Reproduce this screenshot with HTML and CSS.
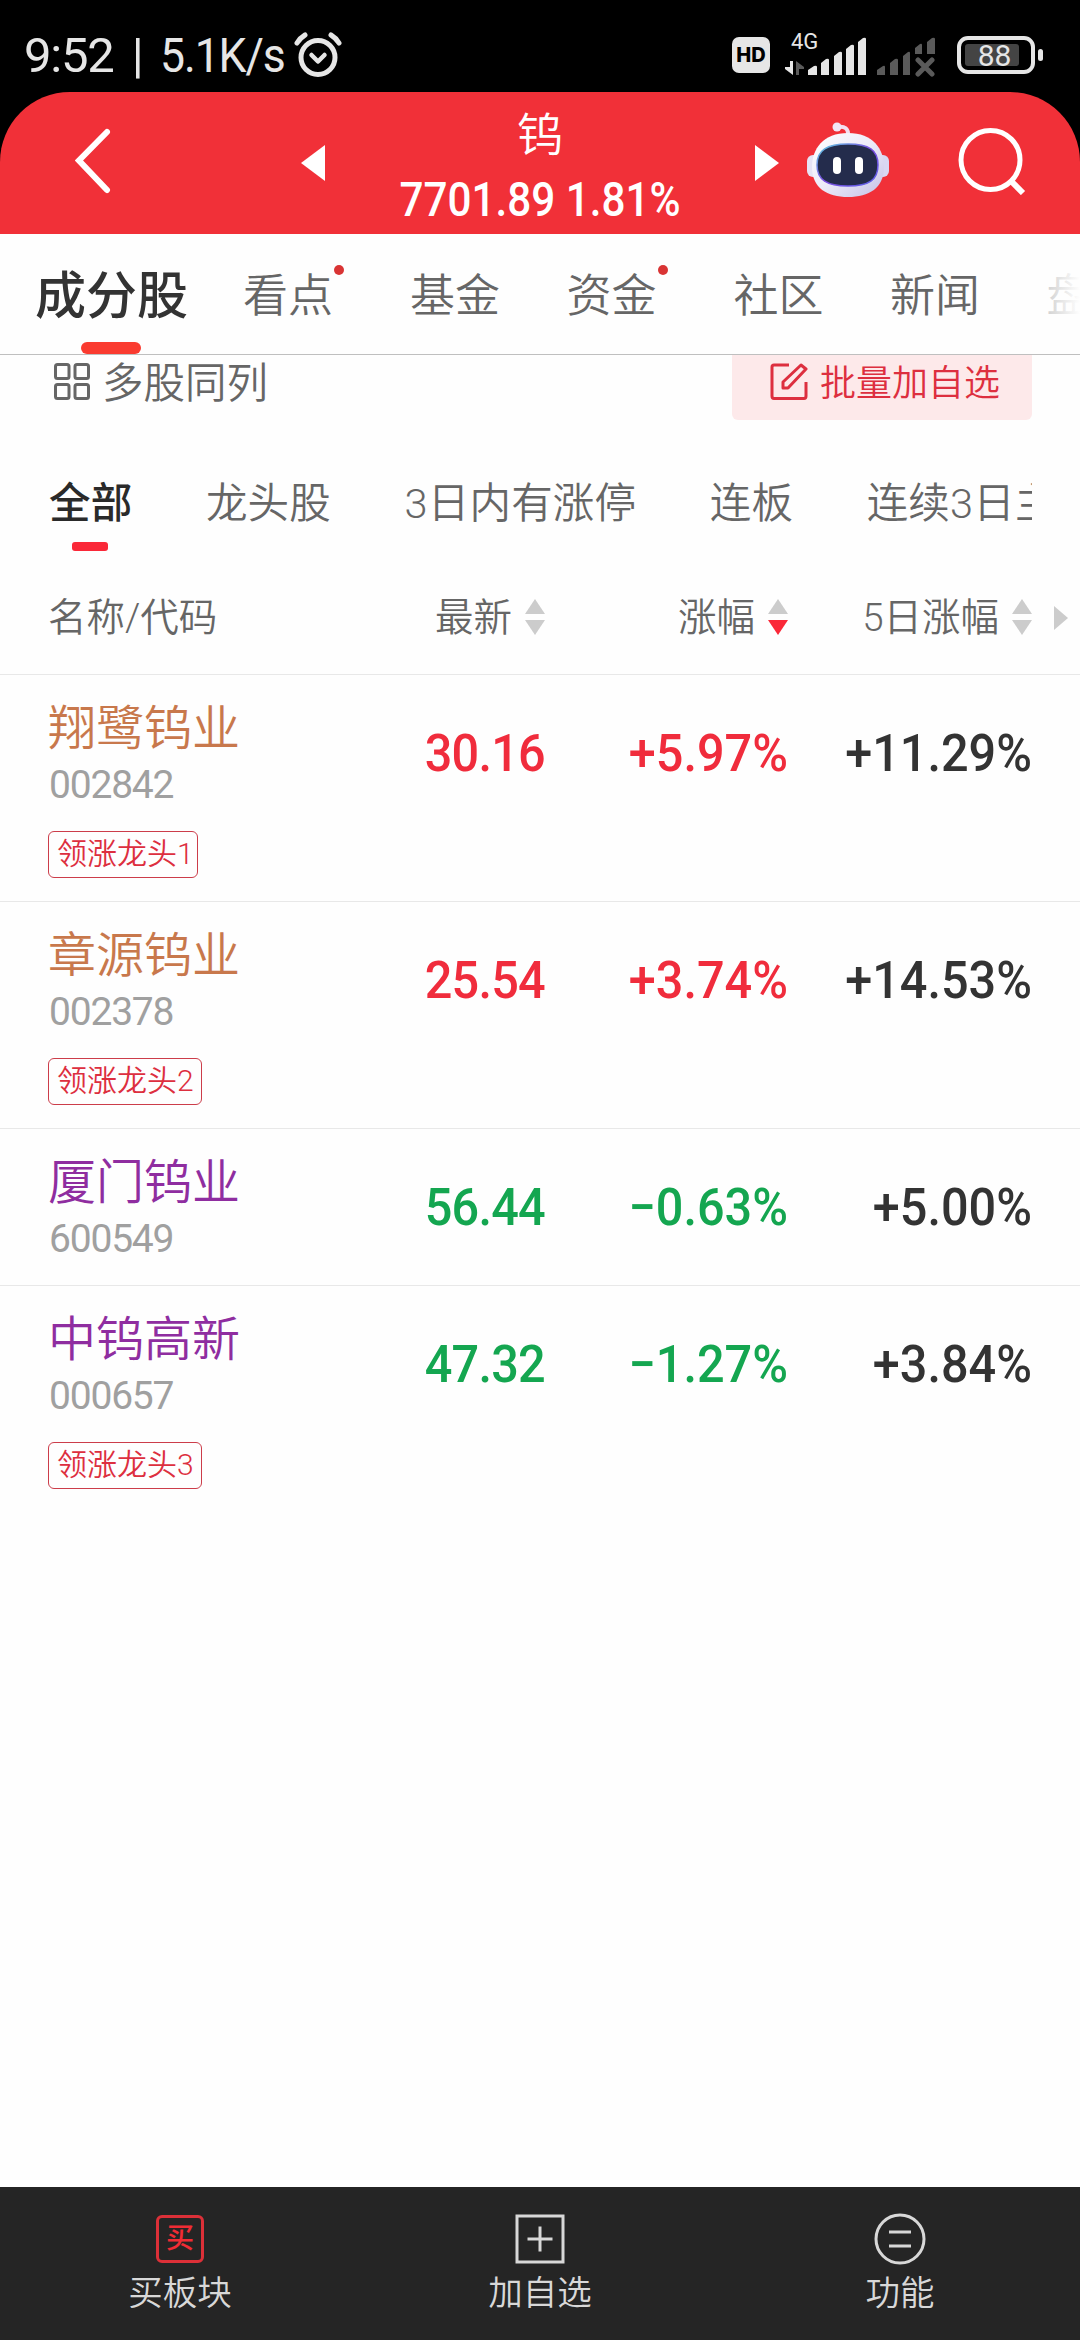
FILE: index.html
```html
<!DOCTYPE html>
<html lang="zh-CN">
<head>
    <meta charset="UTF-8">
    <meta name="viewport" content="width=device-width, initial-scale=1.0">
    <title>钨 - 成分股</title>
    <link rel="stylesheet" href="styles.css">
</head>
<body>
    <div class="status-bar">
        <div class="status-text"><span>9:52 | </span><span class="speed">5.1K/s</span></div>
        <svg class="alarm" width="48" height="46" viewBox="0 0 48 46" fill="none" stroke="#e6e6e6" stroke-linecap="round">
            <circle cx="24" cy="25.500" r="17" stroke-width="5"/>
            <path d="M17.500 23l6.500 6.500 6.500-6.500" stroke-width="4.500" stroke-linejoin="round"/>
            <path d="M3 11Q6 6 11 3M37 3Q42 6 45 11" stroke-width="5"/>
        </svg>
        <div class="status-icons">
            <span class="hd">HD</span>
            <div class="signal">
                <span class="net">4G</span>
                <svg width="82" height="44" viewBox="0 0 82 44">
                    <path fill="#e6e6e6" d="M23 42v-5l6-4q3-1 3 1v8zM36 42v-12l5-4q3-1 3 1v15zM49 42v-19l5-4q3-1 3 1v22zM61 42v-26l5-4q3-1 3 1v29zM73 42v-33l5-4q3-1 3 1v36z"/>
                    <path fill="#e6e6e6" d="M5 28h3v14L0 36v-2h5z"/>
                    <path fill="#5a5a5a" d="M11 42v-14l8 6v2h-5v6z"/>
                </svg>
            </div>
            <svg class="signal-off" width="60" height="44" viewBox="0 0 60 44">
                <path fill="#5a5a5a" d="M1 42v-5l6-4q2-1 2 1v8zM14 42v-12l5-4q3-1 3 1v15zM27 42v-19l5-4q2-1 2 1v22zM39 21v-6l5-4q2-1 2 1v9zM51 21v-12l5-4q3-1 3 1v15z"/>
                <path stroke="#5a5a5a" stroke-width="5" stroke-linecap="round" d="M42 27l14 14M56 27l-14 14"/>
            </svg>
            <div class="battery"><span class="level">88</span></div>
        </div>
    </div>

    <div class="header">
        <svg class="back" width="36" height="66" viewBox="0 0 36 66" fill="none" stroke="#fff" stroke-width="6" stroke-linecap="round">
            <path d="M32 4L4 32.500 32 62"/>
        </svg>
        <svg class="prev" width="24" height="36" viewBox="0 0 24 36"><path fill="#fff" d="M24 0v36L0 18z"/></svg>
        <div class="title">
            <div class="title-name">钨</div>
            <div class="title-price">7701.89 1.81%</div>
        </div>
        <svg class="next" width="24" height="36" viewBox="0 0 24 36"><path fill="#fff" d="M0 0v36l24-18z"/></svg>
        <svg class="robot" width="82" height="76" viewBox="0 0 82 76">
            <defs>
                <linearGradient id="shell" x1="0" y1="0" x2="1" y2="1">
                    <stop offset="0" stop-color="#fff"/>
                    <stop offset=".5" stop-color="#eceaf8"/>
                    <stop offset="1" stop-color="#c4c1e6"/>
                </linearGradient>
                <linearGradient id="rim" x1="0" y1="0" x2="1" y2="1">
                    <stop offset="0" stop-color="#5fd0e0"/>
                    <stop offset=".5" stop-color="#7b4be0"/>
                    <stop offset="1" stop-color="#5a62e8"/>
                </linearGradient>
            </defs>
            <path d="M30 5Q42 3 41 14" fill="none" stroke="#f3dff0" stroke-width="4"/>
            <circle cx="30" cy="5" r="4.500" fill="#f1e6f6"/>
            <rect x="0" y="33" width="14" height="22" rx="6" fill="#e6e3f5"/>
            <rect x="68" y="33" width="14" height="22" rx="6" fill="#d9d7f2"/>
            <path d="M41 11C66 11 77 27 77 45C77 66 62 75 41 75S5 66 5 45C5 27 16 11 41 11z" fill="url(#shell)"/>
            <path d="M41 22C62 22 71 28 71 43C71 58 62 64 41 64S10 58 10 43C10 28 20 22 41 22z" fill="#242c4c" stroke="url(#rim)" stroke-width="1.500"/>
            <rect x="26" y="35" width="8" height="17" rx="4" fill="#fff"/>
            <rect x="48" y="35" width="8" height="17" rx="4" fill="#fff"/>
        </svg>
        <svg class="search" width="68" height="68" viewBox="0 0 68 68" fill="none" stroke="#fff" stroke-width="5">
            <circle cx="32.500" cy="33" r="29.500"/>
            <path d="M53 54l12 12" stroke-width="6"/>
        </svg>
    </div>

    <div class="tabs">
        <span class="tab active">成分股</span>
        <span class="tab dot">看点</span>
        <span class="tab">基金</span>
        <span class="tab dot">资金</span>
        <span class="tab">社区</span>
        <span class="tab">新闻</span>
        <span class="tab">盘</span>
    </div>

    <div class="tools">
        <div class="multi">
            <svg width="36" height="38" viewBox="0 0 36 38" fill="none" stroke="#666" stroke-width="3">
                <rect x="1.500" y="1.500" width="13.500" height="14" rx="2"/>
                <rect x="21" y="1.500" width="13.500" height="14" rx="2"/>
                <rect x="1.500" y="21.500" width="13.500" height="14" rx="2"/>
                <rect x="21" y="21.500" width="13.500" height="14" rx="2"/>
            </svg>
            <span>多股同列</span>
        </div>
        <div class="batch">
            <svg width="38" height="38" viewBox="0 0 38 38" fill="none" stroke="#dd2f3f" stroke-width="3" stroke-linejoin="round">
                <path d="M19 2H4Q2 2 2 4V33Q2 35.500 4 35.500H34Q36 35.500 36 33V19"/>
                <path d="M13 25v-6L31 2l5 4L18 25z"/>
            </svg>
            <span>批量加自选</span>
        </div>
    </div>

    <div class="filters">
        <span class="filter active">全部</span>
        <span class="filter">龙头股</span>
        <span class="filter">3日内有涨停</span>
        <span class="filter">连板</span>
        <span class="filter">连续3日主</span>
    </div>

    <div class="row head">
        <span class="col-name">名称/代码</span>
        <span class="col"><span>最新</span><i class="sort"></i></span>
        <span class="col"><span>涨幅</span><i class="sort desc"></i></span>
        <span class="col"><span>5日涨幅</span><i class="sort"></i></span>
        <i class="more"></i>
    </div>

    <div class="row">
        <div class="stock">
            <div class="name orange">翔鹭钨业</div>
            <div class="code">002842</div>
            <div class="tag first">领涨龙头1</div>
        </div>
        <span class="num price up">30.16</span>
        <span class="num up">+5.97%</span>
        <span class="num">+11.29%</span>
    </div>
    <div class="row">
        <div class="stock">
            <div class="name orange">章源钨业</div>
            <div class="code">002378</div>
            <div class="tag">领涨龙头2</div>
        </div>
        <span class="num price up">25.54</span>
        <span class="num up">+3.74%</span>
        <span class="num">+14.53%</span>
    </div>
    <div class="row">
        <div class="stock">
            <div class="name purple">厦门钨业</div>
            <div class="code">600549</div>
        </div>
        <span class="num price down">56.44</span>
        <span class="num down">−0.63%</span>
        <span class="num">+5.00%</span>
    </div>
    <div class="row last">
        <div class="stock">
            <div class="name purple">中钨高新</div>
            <div class="code">000657</div>
            <div class="tag">领涨龙头3</div>
        </div>
        <span class="num price down">47.32</span>
        <span class="num down">−1.27%</span>
        <span class="num">+3.84%</span>
    </div>

    <div class="bottom-bar">
        <div class="action">
            <span class="buy">买</span>
            <span>买板块</span>
        </div>
        <div class="action">
            <svg width="52" height="52" viewBox="0 0 52 52" fill="none" stroke="#d8d8d8" stroke-width="3">
                <path d="M3 3H49V49H3zM26 13.500V38.500M13.500 26H38.500"/>
            </svg>
            <span>加自选</span>
        </div>
        <div class="action">
            <svg width="52" height="52" viewBox="0 0 52 52" fill="none" stroke="#d8d8d8" stroke-width="3">
                <circle cx="26" cy="26" r="24"/>
                <path d="M15 19H37M15 33H37"/>
            </svg>
            <span>功能</span>
        </div>
    </div>
</body>
</html>
```
FILE: styles.css
```css
* {
    box-sizing: border-box;
}
body {
    margin: 0;
    width: 1080px;
    height: 2340px;
    display: flex;
    flex-direction: column;
    overflow: hidden;
    background: #fefefe;
    font-family: Roboto, "Noto Sans CJK SC", sans-serif;
    font-weight: 350;
    color: #666;
    white-space: nowrap;
}
svg {
    flex: none;
    display: block;
}

/* status bar */
.status-bar {
    height: 92px;
    flex: none;
    display: flex;
    align-items: center;
    padding: 18px 38px 0 24px;
    background: #000;
    color: #e6e6e6;
}
.status-text {
    width: 270px;
    font-size: 49px;
    font-weight: 400;
    letter-spacing: -1.2px;
    word-spacing: 7px;
    white-space: pre;
}
.speed {
    display: inline-block;
    transform: scaleX(.91);
    transform-origin: left;
}
.status-icons {
    margin-left: auto;
    display: flex;
    align-items: center;
}
.hd {
    width: 38px;
    height: 36px;
    border-radius: 7px;
    background: #e6e6e6;
    color: #000;
    font: 800 20px/37px Inter, sans-serif;
    text-align: center;
}
.signal {
    position: relative;
    margin-left: 15px;
}
.net {
    position: absolute;
    left: 6px;
    top: -2px;
    font-size: 22px;
    line-height: 22px;
    font-weight: 400;
}
.signal-off {
    margin-left: 9px;
}
.battery {
    position: relative;
    width: 78px;
    height: 38px;
    margin: 0 7px 0 21px;
    padding: 4px;
    border: 4px solid #e6e6e6;
    border-radius: 11px;
}
.battery::after {
    content: "";
    position: absolute;
    right: -12px;
    top: 9px;
    width: 5px;
    height: 12px;
    border-radius: 3px;
    background: #e6e6e6;
}
.level {
    display: block;
    width: 54px;
    height: 22px;
    padding-left: 5px;
    background: #444;
    border-radius: 3px;
    font-size: 30px;
    line-height: 23px;
    font-weight: 400;
    text-align: center;
}

/* header */
.header {
    height: 142px;
    flex: none;
    display: flex;
    align-items: center;
    padding: 0 54px 0 75px;
    background: #f13038;
    border-radius: 70px 70px 0 0;
    box-shadow: 0 -70px 0 70px #000;
    clip-path: inset(0);
    color: #fff;
}
.back, .search {
    margin-bottom: 5px;
}
.prev {
    margin-left: 190px;
}
.title {
    width: 430px;
    padding-top: 13px;
    text-align: center;
}
.title-name {
    font-size: 46px;
    line-height: 60px;
    font-weight: 350;
}
.title-price {
    font-size: 48px;
    line-height: 69px;
    font-weight: 500;
    transform: scaleX(.88);
}
.robot {
    margin: 0 0 7px 28px;
}
.search {
    margin-left: auto;
}

/* main tabs */
.tabs {
    position: relative;
    height: 121px;
    flex: none;
    display: flex;
    align-items: center;
    padding: 0 0 4px 35px;
    border-bottom: 1px solid #bfbfbf;
    font-size: 45px;
    overflow: hidden;
}
.tabs::after {
    content: "";
    position: absolute;
    right: 0;
    top: 0;
    width: 80px;
    height: 119px;
    background: linear-gradient(90deg, rgba(254, 254, 254, .3), #fefefe);
}
.tab {
    margin-right: 66.5px;
}
.tab.active {
    margin-right: 55px;
    font-size: 51px;
    font-weight: 500;
    color: #333;
}
.tab.active::after {
    content: "";
    position: absolute;
    left: 81px;
    bottom: 0;
    width: 60px;
    height: 12px;
    border-radius: 6px;
    background: #fa3b30;
}
.tab.dot {
    position: relative;
    margin-right: 77px;
}
.tab.dot::after {
    content: "";
    position: absolute;
    right: -11px;
    top: 5px;
    width: 10px;
    height: 10px;
    border-radius: 50%;
    background: #d93434;
}

/* tools */
.tools {
    height: 65px;
    flex: none;
    display: flex;
    justify-content: space-between;
    padding: 0 48px 0 54px;
}
.tools span {
    margin-top: -4px;
}
.multi {
    height: 54px;
    display: flex;
    align-items: center;
    gap: 12px;
    font-size: 41.5px;
}
.batch {
    width: 300px;
    display: flex;
    align-items: center;
    gap: 12px;
    padding: 0 0 12px 38px;
    border-radius: 0 0 6px 6px;
    background: #fde9ea;
    color: #dd2f3f;
    font-size: 36px;
}

/* filters */
.filters {
    position: relative;
    height: 131px;
    flex: none;
    display: flex;
    gap: 73.5px;
    margin: 0 48px 0 49px;
    padding-top: 54px;
    overflow: hidden;
    font-size: 41.5px;
    line-height: 60px;
    letter-spacing: .2px;
}
.filter.active {
    font-weight: 500;
    color: #2a2a2a;
}
.filter.active::after {
    content: "";
    position: absolute;
    left: 23px;
    top: 122px;
    width: 36px;
    height: 9px;
    border-radius: 3px;
    background: #fa2838;
}

/* stock table */
.row {
    position: relative;
    flex: none;
    display: grid;
    grid-template-columns: 300px 197px 243px 244px;
    padding: 21px 48px 22px;
    border-bottom: 1px solid #e8e8e8;
}
.row.last {
    border-bottom: none;
}
.head {
    height: 124px;
    align-items: center;
    padding: 9px 48px 0;
    font-size: 38.5px;
}
.head span span, .col-name {
    margin-top: -6px;
}
.col {
    display: flex;
    align-items: center;
    justify-content: flex-end;
    gap: 13px;
}
.sort {
    width: 20px;
    display: flex;
    flex-direction: column;
    gap: 6px;
}
.sort::before, .sort::after {
    content: "";
    border: 10px solid transparent;
    border-bottom: 15px solid #ccc;
    border-top: none;
}
.sort::after {
    border-top: 15px solid #ccc;
    border-bottom: none;
}
.sort.desc::after {
    border-top-color: #fa2838;
}
.more {
    position: absolute;
    left: 1054px;
    top: 55px;
    border: 12px solid transparent;
    border-left: 14px solid #ccc;
    border-right: none;
}
.name {
    font-size: 48px;
    line-height: 65px;
}
.orange {
    color: #c8784c;
}
.purple {
    color: #8f2da0;
}
.code {
    margin-left: 1px;
    font-size: 39px;
    line-height: 48px;
    font-weight: 400;
    letter-spacing: -1.2px;
    color: #a0a0a0;
}
.tag {
    display: inline-block;
    height: 47px;
    margin: 22px 0 1px;
    padding: 0 7px 0 8px;
    border: 1.5px solid #cc3d4a;
    border-radius: 6px;
    font-size: 30px;
    line-height: 43px;
    color: #dd2f3f;
    vertical-align: top;
}
.tag.first {
    padding-right: 3px;
}
.num {
    padding-top: 26px;
    font-size: 52px;
    line-height: 64px;
    font-weight: 500;
    text-align: right;
    color: #333;
    transform: scaleX(.935);
    transform-origin: right;
}
.num.price {
    letter-spacing: -.8px;
}
.num.up {
    color: #f02c3c;
}
.num.down {
    color: #14a650;
}

/* bottom bar */
.bottom-bar {
    height: 153px;
    flex: none;
    display: flex;
    margin-top: auto;
    background: #252525;
    color: #d8d8d8;
    font-size: 34.5px;
}
.action {
    flex: 1;
    display: flex;
    flex-direction: column;
    align-items: center;
    padding-top: 26px;
    line-height: 56px;
}
.buy {
    width: 48px;
    height: 48px;
    margin: 2px 0;
    border: 3px solid #dc3038;
    border-radius: 6px;
    color: #f02c34;
    font-size: 28px;
    line-height: 41px;
    font-weight: 500;
    text-align: center;
}
```
